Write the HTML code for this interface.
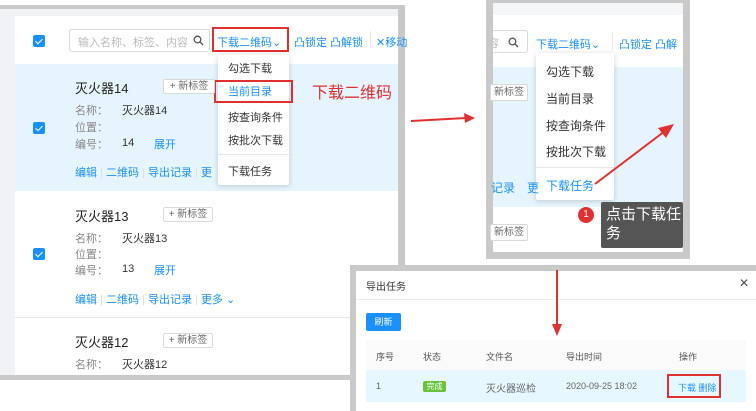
<!DOCTYPE html>
<html><head><meta charset="utf-8"><style>
*{margin:0;padding:0;box-sizing:border-box}
body{width:756px;height:411px;overflow:hidden;background:#fff;font-family:"Liberation Sans","Noto Sans CJK SC",sans-serif;position:relative;font-size:11px;color:#333}
.a{position:absolute;white-space:nowrap}
.blue{color:#1890ff}
.gray{color:#888}
.cb{position:absolute;width:12px;height:12px;background:#1890ff;border-radius:2px}
.cb:after{content:"";position:absolute;left:4px;top:1.5px;width:3px;height:6px;border:solid #fff;border-width:0 1.5px 1.5px 0;transform:rotate(45deg)}
.tag{position:absolute;border:1px solid #d9d9d9;border-radius:2px;background:#fff;font-size:10px;color:#666;text-align:center;line-height:13px}
.dd{position:absolute;background:#fff;box-shadow:0 1px 6px rgba(0,0,0,.18);border-radius:2px}
.rb{position:absolute;border:2px solid #e0302f}
</style></head><body>
<!-- left panel -->
<div class="a" style="left:0;top:5px;width:405px;height:375px;background:#c9c9c9"></div>
<div class="a" style="left:0;top:9px;width:398px;height:366px;background:#f0f2f5"></div>
<div class="a" style="left:15px;top:16px;width:383px;height:359px;background:#fff"></div>
<div class="a" style="left:15px;top:64px;width:383px;height:127px;background:#e6f4fd"></div>
<div class="a" style="left:15px;top:317px;width:383px;height:1px;background:#e8e8e8"></div>
<div class="cb" style="left:33px;top:35px"></div>
<div class="a" style="left:69px;top:29px;width:141px;height:23px;border:1px solid #d9d9d9;border-radius:3px;background:#fff"></div>
<div class="a" style="left:78px;top:34px;color:#bbb">输入名称、标签、内容</div>
<svg class="a" style="left:193px;top:35px" width="11" height="11"><circle cx="4.5" cy="4.5" r="3.3" fill="none" stroke="#555" stroke-width="1.3"/><path d="M7 7l3 3" stroke="#555" stroke-width="1.3"/></svg>
<div class="a blue" style="left:217px;top:34px">下载二维码⌄</div>
<div class="a blue" style="left:294px;top:34px">凸锁定 凸解锁</div>
<div class="a" style="left:370px;top:31px;width:1px;height:16px;background:#e8e8e8"></div>
<div class="a blue" style="left:376px;top:34px">✕移动</div>
<div class="rb" style="left:212px;top:27px;width:77px;height:25px"></div>
<div class="dd" style="left:218px;top:55px;width:71px;height:130px"></div>
<div class="a" style="left:228px;top:60px">勾选下载</div>
<div class="a blue" style="left:228px;top:83px">当前目录</div>
<div class="a" style="left:228px;top:109px">按查询条件</div>
<div class="a" style="left:228px;top:132px">按批次下载</div>
<div class="a" style="left:218px;top:154px;width:71px;height:1px;background:#e8e8e8"></div>
<div class="a" style="left:228px;top:163px">下载任务</div>
<div class="rb" style="left:214px;top:80px;width:79px;height:23px"></div>
<div class="a" style="left:312px;top:79px;color:#e0302f;font-size:16px">下载二维码</div>
<!-- item 14 -->
<div class="a" style="left:75px;top:78px;font-size:13px;color:#222">灭火器14</div>
<div class="tag" style="left:163px;top:79px;width:52px;height:15px">+ 新标签</div>
<div class="a gray" style="left:75px;top:102px">名称：</div><div class="a" style="left:122px;top:102px">灭火器14</div>
<div class="a gray" style="left:75px;top:119px">位置：</div>
<div class="a gray" style="left:75px;top:136px">编号：</div><div class="a" style="left:122px;top:137px">14</div><div class="a blue" style="left:154px;top:136px">展开</div>
<div class="cb" style="left:33px;top:122px"></div>
<div class="a blue" style="left:75px;top:164px">编辑 <span style="color:#ddd">|</span> 二维码 <span style="color:#ddd">|</span> 导出记录 <span style="color:#ddd">|</span> 更</div>
<!-- item 13 -->
<div class="a" style="left:75px;top:206px;font-size:13px;color:#222">灭火器13</div>
<div class="tag" style="left:163px;top:207px;width:50px;height:15px">+ 新标签</div>
<div class="a gray" style="left:75px;top:230px">名称：</div><div class="a" style="left:122px;top:230px">灭火器13</div>
<div class="a gray" style="left:75px;top:246px">位置：</div>
<div class="a gray" style="left:75px;top:262px">编号：</div><div class="a" style="left:122px;top:263px">13</div><div class="a blue" style="left:154px;top:262px">展开</div>
<div class="cb" style="left:33px;top:248px"></div>
<div class="a blue" style="left:75px;top:291px">编辑 <span style="color:#ddd">|</span> 二维码 <span style="color:#ddd">|</span> 导出记录 <span style="color:#ddd">|</span> 更多 ⌄</div>
<!-- item 12 -->
<div class="a" style="left:75px;top:332px;font-size:13px;color:#222">灭火器12</div>
<div class="tag" style="left:163px;top:333px;width:50px;height:15px">+ 新标签</div>
<div class="a gray" style="left:75px;top:356px">名称：</div><div class="a" style="left:122px;top:356px">灭火器12</div>
<!-- arrow 1 -->
<svg class="a" style="left:408px;top:110px" width="70" height="18"><path d="M3 11 L58 8" stroke="#e0302f" stroke-width="2"/><path d="M56 3 L67 8 L57 13Z" fill="#e0302f"/></svg>
<!-- right panel -->
<div class="a" style="left:486px;top:0;width:204px;height:259px;background:#c9c9c9"></div>
<div class="a" style="left:493px;top:3px;width:190px;height:249px;background:#f5f6f8"></div>
<div class="a" style="left:493px;top:15px;width:190px;height:237px;background:#fff"></div>
<div class="a" style="left:493px;top:67px;width:190px;height:140px;background:#e6f4fd"></div>
<div class="a" style="left:493px;top:30px;width:35px;height:23px;border:1px solid #d9d9d9;border-left:none;border-radius:0 3px 3px 0;background:#fff"></div>
<div class="a" style="left:488px;top:35px;color:#bbb">容</div>
<svg class="a" style="left:508px;top:37px" width="11" height="11"><circle cx="4.5" cy="4.5" r="3.3" fill="none" stroke="#555" stroke-width="1.3"/><path d="M7 7l3 3" stroke="#555" stroke-width="1.3"/></svg>
<div class="a" style="left:486px;top:0;width:7px;height:259px;background:#c9c9c9"></div>
<div class="a blue" style="left:536px;top:36px">下载二维码⌄</div>
<div class="a" style="left:612px;top:32px;width:1px;height:18px;background:#e8e8e8"></div>
<div class="a blue" style="left:619px;top:36px">凸锁定 凸解</div>
<div class="dd" style="left:536px;top:53px;width:78px;height:147px"></div>
<div class="a" style="left:546px;top:63px;font-size:12px">勾选下载</div>
<div class="a" style="left:546px;top:90px;font-size:12px">当前目录</div>
<div class="a" style="left:546px;top:117px;font-size:12px">按查询条件</div>
<div class="a" style="left:546px;top:143px;font-size:12px">按批次下载</div>
<div class="a" style="left:536px;top:167px;width:78px;height:1px;background:#e8e8e8"></div>
<div class="a blue" style="left:546px;top:177px;font-size:12px">下载任务</div>
<div class="tag" style="left:490px;top:84px;width:38px;height:17px;line-height:15px">新标签</div>
<div class="tag" style="left:490px;top:224px;width:38px;height:17px;line-height:15px">新标签</div>
<div class="a blue" style="left:491px;top:179px;font-size:12px">记录</div>
<div class="a blue" style="left:527px;top:179px;font-size:12px">更</div>
<div class="a" style="left:578px;top:207px;width:16px;height:16px;border-radius:50%;background:#e0302f;color:#fff;font-size:10px;text-align:center;line-height:16px">1</div>
<div class="a" style="left:596px;top:212px;width:0;height:0;border:5px solid transparent;border-right-color:#555"></div>
<div class="a" style="left:601px;top:202px;width:82px;height:46px;background:#555;border-radius:2px;color:#fff;font-size:15px;line-height:19px;padding:3px 2px 3px 5px;white-space:normal;word-break:break-all">点击下载任务</div>
<svg class="a" style="left:590px;top:118px" width="90" height="72"><path d="M5 66 L75 13" stroke="#e0302f" stroke-width="2"/><path d="M84 6 L68 10 L76 20Z" fill="#e0302f"/></svg>
<!-- dialog -->
<div class="a" style="left:350px;top:265px;width:406px;height:146px;background:#c9c9c9"></div>
<div class="a" style="left:356px;top:271px;width:400px;height:140px;background:#fff"></div>
<div class="a" style="left:366px;top:278px;font-size:10px">导出任务</div>
<div class="a" style="left:739px;top:276px;font-size:12px;color:#555">✕</div>
<div class="a" style="left:356px;top:299px;width:400px;height:1px;background:#eee"></div>
<div class="a" style="left:366px;top:313px;width:35px;height:18px;background:#1890ff;border-radius:2px;color:#fff;font-size:9px;text-align:center;line-height:18px">刷新</div>
<div class="a" style="left:366px;top:340px;width:380px;height:30px;background:#fafafa"></div>
<div class="a" style="left:366px;top:370px;width:380px;height:32px;background:#e6f7ff"></div>
<div class="a" style="left:376px;top:350px;font-size:9px;color:#555">序号</div>
<div class="a" style="left:423px;top:350px;font-size:9px;color:#555">状态</div>
<div class="a" style="left:486px;top:350px;font-size:9px;color:#555">文件名</div>
<div class="a" style="left:566px;top:350px;font-size:9px;color:#555">导出时间</div>
<div class="a" style="left:679px;top:350px;font-size:9px;color:#555">操作</div>
<div class="a" style="left:376px;top:381px;font-size:9px;color:#666">1</div>
<div class="a" style="left:423px;top:381px;width:23px;height:11px;background:#67c23a;border-radius:2px;color:#fff;font-size:8px;text-align:center;line-height:11px">完成</div>
<div class="a" style="left:486px;top:380px;font-size:10px;color:#666">灭火器巡检</div>
<div class="a" style="left:566px;top:381px;font-size:9px;color:#666">2020-09-25 18:02</div>
<div class="a blue" style="left:678px;top:381px;font-size:9px">下载 删除</div>
<div class="rb" style="left:667px;top:374px;width:54px;height:24px"></div>
<svg class="a" style="left:550px;top:270px" width="14" height="68"><path d="M7 0 L7 56" stroke="#e0302f" stroke-width="2"/><path d="M2 54 L7 66 L12 54Z" fill="#e0302f"/></svg>
</body></html>
